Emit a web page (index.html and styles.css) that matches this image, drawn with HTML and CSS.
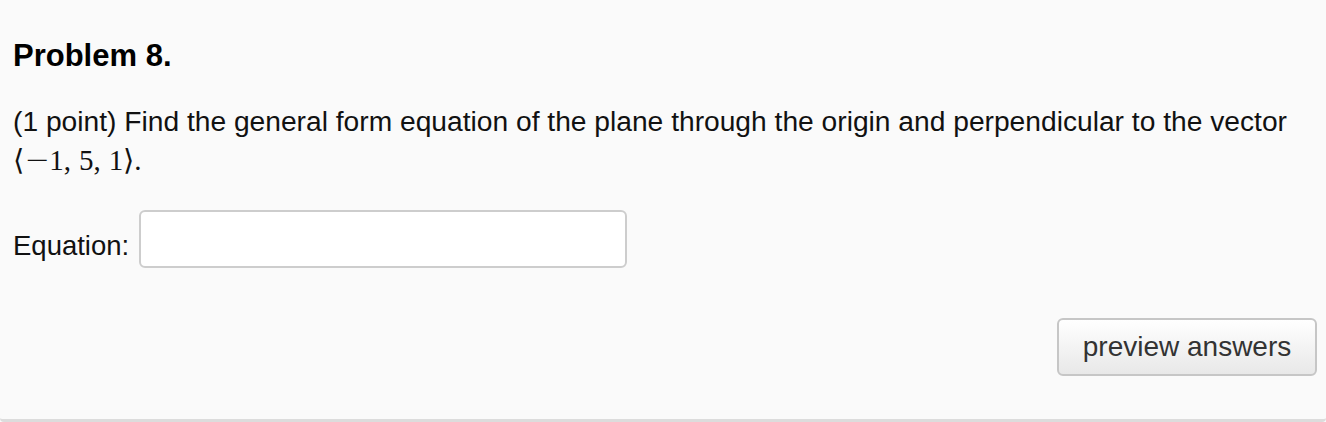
FILE: index.html
```html
<!DOCTYPE html>
<html>
<head>
<meta charset="utf-8">
<link rel="stylesheet" href="styles.css">
</head>
<body>
<div class="panel">
  <h3 class="title">Problem 8.</h3>
  <p class="question">(1 point) Find the general form equation of the plane through the origin and perpendicular to the vector <span class="math">⟨<span class="minus">−</span>1,<span class="sp"></span>5,<span class="sp"></span>1⟩.</span></p>
  <div class="answer-row">
    <label class="label" for="eq">Equation:</label>
    <input class="input" id="eq" type="text">
  </div>
  <div class="actions">
    <button class="btn" type="button">preview answers</button>
  </div>
</div>
</body>
</html>
```
FILE: styles.css
```css
html, body {
  margin: 0;
  padding: 0;
  background: #fafafa;
}
body {
  font-family: "Liberation Sans", Arial, sans-serif;
  color: #111;
}
.panel {
  width: 1326px;
  height: 422px;
  box-sizing: border-box;
  border-bottom: 3px solid #dcdcdc;
  border-radius: 0 0 4px 4px;
  padding: 38px 9px 0 13px;
}
.title {
  margin: 0;
  font-size: 31px;
  font-weight: bold;
  line-height: 36px;
  color: #000;
}
.question {
  margin: 28px 0 0 0;
  font-size: 28.2px;
  line-height: 39px;
}
.math {
  font-family: "Liberation Serif", "Times New Roman", serif;
  font-size: 29px;
  line-height: 1;
  white-space: nowrap;
}
.minus {
  display: inline-block;
  transform: scaleX(1.4);
  margin: 0 4px 0 5px;
}
.sp {
  display: inline-block;
  width: 8px;
}
.answer-row {
  display: flex;
  align-items: flex-start;
  gap: 10px;
  margin-top: 30px;
}
.label {
  font-size: 27.5px;
  line-height: 32px;
  margin-top: 20px;
}
.input {
  width: 488px;
  height: 58px;
  box-sizing: border-box;
  border: 2px solid #cdcdcd;
  border-radius: 6px;
  background: #fff;
  margin: 0;
}
.actions {
  display: flex;
  justify-content: flex-end;
  margin-top: 50px;
}
.btn {
  width: 260px;
  height: 58px;
  box-sizing: border-box;
  border: 2px solid #c6c6c6;
  border-radius: 6px;
  background: linear-gradient(#ffffff, #e8e8e8);
  font-family: "Liberation Sans", Arial, sans-serif;
  font-size: 28px;
  color: #333;
  padding: 0;
}
```
